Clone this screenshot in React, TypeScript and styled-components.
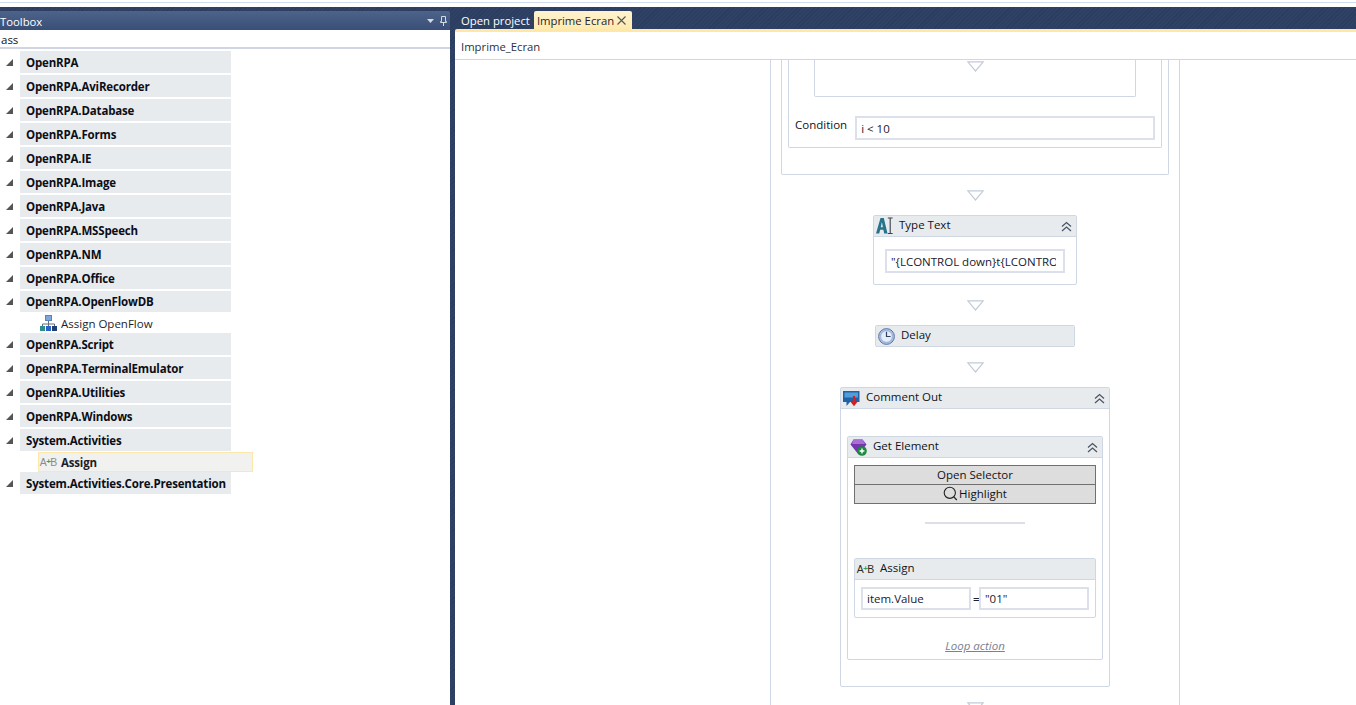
import styled, { createGlobalStyle } from "styled-components";

const GlobalStyle = createGlobalStyle`
    html, body {
        margin: 0;
        padding: 0;
        background: #fff;
        overflow: hidden;
    }
    * {
        box-sizing: border-box;
    }
`;

const Page = styled.div`
    width: 1356px;
    height: 705px;
    display: flex;
    flex-direction: column;
    overflow: hidden;
    font-family: "Open Sans", "Noto Sans", sans-serif;
    font-size: 11.5px;
    color: #1e1e2a;
`;

const TopStrip = styled.div`
    height: 7px;
    flex: none;
    padding-top: 2px;
    background: #fff;
    &::before {
        content: "";
        display: block;
        height: 1px;
        background: #cfdcec;
    }
`;

const Workspace = styled.div`
    flex: 1;
    min-height: 0;
    display: flex;
    background: repeating-linear-gradient(135deg, #2b3d5e 0 1px, #2f4265 1px 3px);
`;

/* toolbox */

const ToolboxPanel = styled.div`
    width: 450px;
    flex: none;
    display: flex;
    flex-direction: column;
    padding-top: 4px;
`;

const ToolboxTitle = styled.div`
    height: 19px;
    flex: none;
    display: flex;
    align-items: center;
    justify-content: space-between;
    padding: 1px 3px 0 0;
    color: #fff;
    font-size: 11.3px;
    background: linear-gradient(#4d6389, #394f77);
    border-top-right-radius: 2px;
`;

const TitleIcons = styled.div`
    display: flex;
    align-items: center;
    gap: 6px;
`;

const SearchBox = styled.div`
    height: 19px;
    flex: none;
    padding: 1px 1px 0;
    line-height: 18px;
    font-size: 11.5px;
    color: #10131c;
    background: #fff;
    border-bottom: 2px solid #cfd5e2;
`;

const TreeList = styled.div`
    flex: 1;
    padding-top: 2px;
    background: #fff;
`;

const GroupRow = styled.div<{ $open?: boolean; $compact?: boolean }>`
    display: flex;
    align-items: center;
    height: ${(p) => (p.$compact ? "21px" : "22px")};
    margin-bottom: ${(p) => (p.$open ? "0" : "2px")};
`;

const Expander = styled.div`
    width: 20px;
    flex: none;
    display: flex;
    padding-left: 6px;
`;

const GroupLabel = styled.div<{ $compact?: boolean }>`
    width: 211px;
    height: 100%;
    padding-left: 6px;
    line-height: ${(p) => (p.$compact ? "21px" : "23px")};
    font-weight: 700;
    letter-spacing: -0.17px;
    color: #0b0e16;
    white-space: nowrap;
    background: #e8ebee;
`;

const ToolRow = styled.div<{ $selected?: boolean; $tall?: boolean }>`
    display: flex;
    align-items: center;
    gap: 4px;
    width: 215px;
    height: ${(p) => (p.$tall ? "21px" : "20px")};
    margin: ${(p) => (p.$selected ? "1px 0 0 38px" : "0 0 0 38px")};
    padding: ${(p) => (p.$tall ? "1px 0 0 1px" : "0 0 0 1px")};
    font-weight: ${(p) => (p.$selected ? 700 : 400)};
    letter-spacing: ${(p) => (p.$selected ? "-0.17px" : "0")};
    background: ${(p) => (p.$selected ? "#f1f1ef" : "transparent")};
    border: 1px solid ${(p) => (p.$selected ? "#fde8ac" : "transparent")};
`;

/* document */

const DocumentArea = styled.div`
    flex: 1;
    min-width: 0;
    display: flex;
    flex-direction: column;
    padding-left: 5px;
`;

const TabStrip = styled.div`
    height: 18px;
    flex: none;
    display: flex;
    align-items: flex-end;
    padding: 0 0 0 6px;
    margin-top: 4px;
`;

const Tab = styled.div<{ $active?: boolean }>`
    display: flex;
    align-items: center;
    gap: 3px;
    height: 18px;
    padding: ${(p) => (p.$active ? "0 6px 0 3px" : "0 4px 0 0")};
    color: ${(p) => (p.$active ? "#1e1e2a" : "#fff")};
    font-size: 11.3px;
    background: ${(p) => (p.$active ? "linear-gradient(#fff3cf, #ffeab0)" : "transparent")};
    border-radius: 2px 2px 0 0;
`;

const DocumentBody = styled.div`
    flex: 1;
    min-height: 0;
    display: flex;
    flex-direction: column;
    background: #fff;
    border-top: 3px solid #ffe8a6;
    border-top-left-radius: 2px;
`;

const DocumentTitle = styled.div`
    height: 28px;
    flex: none;
    padding-left: 6px;
    line-height: 29px;
    font-size: 11.3px;
    color: #2c3040;
    border-bottom: 1px solid #d0d6e2;
`;

const Canvas = styled.div`
    flex: 1;
    min-height: 0;
    overflow: hidden;
    display: flex;
    justify-content: center;
    padding-left: 139px;
`;

const OuterSequence = styled.div`
    width: 410px;
    height: 660px;
    flex: none;
    display: flex;
    flex-direction: column;
    align-items: center;
    border-left: 1px solid #d0d7e4;
    border-right: 1px solid #d0d7e4;
`;

const Frame = styled.div<{ $w: number; $h: number }>`
    width: ${(p) => p.$w}px;
    height: ${(p) => p.$h}px;
    flex: none;
    display: flex;
    flex-direction: column;
    align-items: center;
    border: 1px solid #d0d7e4;
    border-top: none;
    border-radius: 0 0 2px 2px;
`;

const ConditionRow = styled.div`
    width: 100%;
    display: flex;
    align-items: flex-start;
    gap: 8px;
    margin-top: 20px;
    padding-left: 6px;
    line-height: 16px;
`;

const ConditionLabel = styled.div`
    color: #0f1320;
`;

const Card = styled.div<{ $w: number; $h: number; $mt?: number }>`
    width: ${(p) => p.$w}px;
    height: ${(p) => p.$h}px;
    flex: none;
    margin-top: ${(p) => p.$mt ?? 0}px;
    display: flex;
    flex-direction: column;
    background: #fff;
    border: 1px solid #d0d7e4;
    border-radius: 2px;
`;

const CardHeader = styled.div`
    height: 21px;
    flex: none;
    display: flex;
    align-items: center;
    padding: 0 3px 0 2px;
    background: #e8ebee;
    border-bottom: 1px solid #d0d7e4;
    line-height: 18px;
`;

const CardTitle = styled.div`
    flex: 1;
    margin-left: 6px;
    padding-bottom: 3px;
    color: #0f1320;
`;

const CardBody = styled.div<{ $pad: string }>`
    flex: 1;
    min-height: 0;
    display: flex;
    flex-direction: column;
    align-items: center;
    padding: ${(p) => p.$pad};
`;

const ExpressionInput = styled.div<{ $w: number; $tall?: boolean; $raised?: boolean }>`
    width: ${(p) => p.$w}px;
    height: ${(p) => (p.$tall ? "24px" : "23px")};
    margin-top: ${(p) => (p.$raised ? "-1px" : "0")};
    flex: none;
    padding: 0 4px;
    line-height: ${(p) => (p.$tall ? "21px" : "20px")};
    color: #20202e;
    background: #fff;
    border: 2px solid #dbe0ea;
`;

const ClippedValue = styled.div`
    width: 165px;
    white-space: nowrap;
    overflow: hidden;
`;

const ActionButton = styled.div`
    width: 242px;
    height: 20px;
    flex: none;
    display: flex;
    align-items: center;
    justify-content: center;
    gap: 1px;
    padding-bottom: 2px;
    color: #0f1219;
    background: #dddddd;
    border: 1px solid #707070;
    & + & {
        margin-top: -1px;
    }
`;

const Divider = styled.div`
    width: 100px;
    height: 2px;
    flex: none;
    margin: 18px 0 34px;
    background: #dcdfe5;
`;

const AssignFields = styled.div`
    display: flex;
    align-items: center;
    gap: 2px;
`;

const EqualsSign = styled.span`
    width: 4px;
    text-align: center;
    font-weight: 600;
    color: #20202e;
`;

const LoopAction = styled.div`
    margin-top: 20px;
    color: #7b8190;
    font-style: italic;
    text-decoration: underline;
    line-height: 16px;
`;

const DropArrowBox = styled.div<{ $mt: number }>`
    flex: none;
    display: flex;
    height: 11px;
    margin-top: ${(p) => p.$mt}px;
`;

const SmallIcon = styled.svg`
    flex: none;
    display: block;
`;

const IconLetter = styled.span`
    font-family: "Liberation Sans", sans-serif;
    font-weight: 400;
    letter-spacing: 0;
`;

const AssignGlyph = styled.div<{ $muted?: boolean }>`
    width: 17px;
    flex: none;
    display: flex;
    align-items: center;
    justify-content: center;
    font-size: 10.5px;
    line-height: 12px;
    color: ${(p) => (p.$muted ? "#8b8b8b" : "#2b2b2b")};
`;

const PlusArrow = styled.span`
    color: #3f9e55;
    font-size: 8px;
    font-weight: 700;
    margin: 0 -0.5px;
    font-family: "Liberation Sans", sans-serif;
`;

const DropArrow = ({ mt }: { mt: number }) => (
    <DropArrowBox $mt={mt}>
        <svg width="17" height="11" viewBox="0 0 17 11">
            <path d="M0.8 0.8H16.2L8.5 10Z" fill="#fff" stroke="#c3cbd8" strokeWidth="1.2" />
        </svg>
    </DropArrowBox>
);

const Collapse = () => (
    <SmallIcon width="13" height="13" viewBox="0 0 13 13">
        <path d="M2 6.5L6.5 2.5L11 6.5M2 11L6.5 7L11 11" fill="none" stroke="#4a5361" strokeWidth="1.2" />
    </SmallIcon>
);

const ExpandedTriangle = () => (
    <SmallIcon width="7" height="7" viewBox="0 0 7 7">
        <path d="M7 0V7H0Z" fill="#555" />
    </SmallIcon>
);

const NetworkIcon = () => (
    <SmallIcon width="17" height="17" viewBox="0 0 17 17">
        <rect x="5.5" y="0.5" width="6" height="5" fill="#7fa6da" stroke="#5a83bb" />
        <path d="M8.5 6V9M2.5 11V9H14.5V11M8.5 9V11" fill="none" stroke="#6b6b6b" />
        <rect x="0" y="11" width="5" height="5" fill="#2f8c8c" />
        <rect x="6" y="11" width="5" height="5" fill="#2a62c9" />
        <rect x="12" y="11" width="5" height="5" fill="#1f3f78" />
    </SmallIcon>
);

const AssignIcon = ({ muted }: { muted?: boolean }) => (
    <AssignGlyph $muted={muted}>
        <IconLetter>A</IconLetter>
        <PlusArrow>+</PlusArrow>
        <IconLetter>B</IconLetter>
    </AssignGlyph>
);

const TypeTextIcon = () => (
    <SmallIcon width="17" height="18" viewBox="0 0 17 18">
        <path d="M0 16.5L4.5 1H7.8L11.5 16.5H8.2L7.4 12.8H4.2L3.2 16.5ZM4.8 10.3H6.9L5.9 5Z" fill="#27738c" />
        <path d="M11.8 1H16.6M14.2 1V16.5M11.8 16.5H16.6" fill="none" stroke="#39424d" strokeWidth="1.1" />
    </SmallIcon>
);

const ClockIcon = () => (
    <SmallIcon width="17" height="17" viewBox="0 0 17 17">
        <circle cx="8.5" cy="8.5" r="7.9" fill="#a9c0e4" stroke="#5e78a6" />
        <circle cx="8.5" cy="8.5" r="5.8" fill="#e6edf8" stroke="#8fa6cc" strokeWidth="0.7" />
        <path d="M8.5 3.8V8.5H12.6" fill="none" stroke="#2f4268" strokeWidth="1.2" />
    </SmallIcon>
);

const CommentIcon = () => (
    <SmallIcon width="17" height="17" viewBox="0 0 17 17">
        <path d="M0 1H16.5V12H7L3.5 16V12H0Z" fill="#1f62a8" />
        <path d="M1.5 2.5H15V7.5H1.5Z" fill="#4f9ddb" />
        <path d="M11 6V12.5M8.3 11L11 14.5L13.7 11" fill="none" stroke="#cf2126" strokeWidth="2.1" />
    </SmallIcon>
);

const GemIcon = () => (
    <SmallIcon width="17" height="17" viewBox="0 0 17 17">
        <path d="M3.5 0.5H12.5L16.5 5.5L8.5 15.5L0.5 5.5Z" fill="#7636ac" />
        <path d="M3.5 0.5H12.5L15 5H2Z" fill="#a86fd6" />
        <circle cx="12" cy="12" r="4.8" fill="#1c8a3f" />
        <path d="M12 9.6V14.4M9.6 12H14.4" stroke="#fff" strokeWidth="1.4" />
    </SmallIcon>
);

const SearchIcon = () => (
    <SmallIcon width="15" height="15" viewBox="0 0 15 15">
        <circle cx="6.8" cy="6.8" r="5.6" fill="none" stroke="#222" strokeWidth="1.1" />
        <path d="M10.8 10.8L13.8 14" fill="none" stroke="#222" strokeWidth="1.2" />
    </SmallIcon>
);

const CloseIcon = () => (
    <SmallIcon width="9" height="9" viewBox="0 0 9 9">
        <path d="M0.5 0.5L8.5 8.5M8.5 0.5L0.5 8.5" fill="none" stroke="#555" strokeWidth="1.1" />
    </SmallIcon>
);

const DropdownIcon = () => (
    <SmallIcon width="7" height="4" viewBox="0 0 7 4">
        <path d="M0 0H7L3.5 4Z" fill="#d5dbe6" />
    </SmallIcon>
);

const PinIcon = () => (
    <SmallIcon width="7" height="10" viewBox="0 0 7 10">
        <path d="M1.5 0.5H5.5V5.5H6.5V6.5H0.5V5.5H1.5ZM3.5 6.5V10" fill="none" stroke="#d5dbe6" />
    </SmallIcon>
);

const groups = [
    { name: "OpenRPA" },
    { name: "OpenRPA.AviRecorder" },
    { name: "OpenRPA.Database" },
    { name: "OpenRPA.Forms" },
    { name: "OpenRPA.IE" },
    { name: "OpenRPA.Image" },
    { name: "OpenRPA.Java" },
    { name: "OpenRPA.MSSpeech" },
    { name: "OpenRPA.NM" },
    { name: "OpenRPA.Office" },
    { name: "OpenRPA.OpenFlowDB", tool: "Assign OpenFlow", compact: true },
    { name: "OpenRPA.Script" },
    { name: "OpenRPA.TerminalEmulator" },
    { name: "OpenRPA.Utilities" },
    { name: "OpenRPA.Windows" },
    { name: "System.Activities", tool: "Assign", selected: true },
    { name: "System.Activities.Core.Presentation" },
];

const App = () => {
    return (
        <Page>
            <GlobalStyle />
            <TopStrip />
            <Workspace>
                <ToolboxPanel>
                    <ToolboxTitle>
                        Toolbox
                        <TitleIcons>
                            <DropdownIcon />
                            <PinIcon />
                        </TitleIcons>
                    </ToolboxTitle>
                    <SearchBox>ass</SearchBox>
                    <TreeList>
                        {groups.map((group) => (
                            <div key={group.name}>
                                <GroupRow $open={!!group.tool} $compact={group.compact}>
                                    <Expander>
                                        <ExpandedTriangle />
                                    </Expander>
                                    <GroupLabel $compact={group.compact}>{group.name}</GroupLabel>
                                </GroupRow>
                                {group.tool && (
                                    <ToolRow $selected={group.selected} $tall={group.compact}>
                                        {group.selected ? <AssignIcon muted /> : <NetworkIcon />}
                                        {group.tool}
                                    </ToolRow>
                                )}
                            </div>
                        ))}
                    </TreeList>
                </ToolboxPanel>
                <DocumentArea>
                    <TabStrip>
                        <Tab>Open project</Tab>
                        <Tab $active>
                            Imprime Ecran
                            <CloseIcon />
                        </Tab>
                    </TabStrip>
                    <DocumentBody>
                        <DocumentTitle>Imprime_Ecran</DocumentTitle>
                        <Canvas>
                            <OuterSequence>
                                <Frame $w={388} $h={115}>
                                    <Frame $w={374} $h={88}>
                                        <Frame $w={322} $h={37}>
                                            <DropArrow mt={1} />
                                        </Frame>
                                        <ConditionRow>
                                            <ConditionLabel>Condition</ConditionLabel>
                                            <ExpressionInput $w={300} $tall $raised>i &lt; 10</ExpressionInput>
                                        </ConditionRow>
                                    </Frame>
                                </Frame>
                                <DropArrow mt={15} />
                                <Card $w={204} $h={70} $mt={14}>
                                    <CardHeader>
                                        <TypeTextIcon />
                                        <CardTitle>Type Text</CardTitle>
                                        <Collapse />
                                    </CardHeader>
                                    <CardBody $pad="12px 0 0">
                                        <ExpressionInput $w={180} $tall>
                                            <ClippedValue>"{"{"}LCONTROL down{"}"}t{"{"}LCONTROL up{"}"}"</ClippedValue>
                                        </ExpressionInput>
                                    </CardBody>
                                </Card>
                                <DropArrow mt={15} />
                                <Card $w={200} $h={22} $mt={14}>
                                    <CardHeader>
                                        <ClockIcon />
                                        <CardTitle>Delay</CardTitle>
                                    </CardHeader>
                                </Card>
                                <DropArrow mt={15} />
                                <Card $w={270} $h={300} $mt={14}>
                                    <CardHeader>
                                        <CommentIcon />
                                        <CardTitle>Comment Out</CardTitle>
                                        <Collapse />
                                    </CardHeader>
                                    <CardBody $pad="27px 0 0">
                                        <Card $w={256} $h={224}>
                                            <CardHeader>
                                                <GemIcon />
                                                <CardTitle>Get Element</CardTitle>
                                                <Collapse />
                                            </CardHeader>
                                            <CardBody $pad="7px 0 0">
                                                <ActionButton>Open Selector</ActionButton>
                                                <ActionButton>
                                                    <SearchIcon />
                                                    Highlight
                                                </ActionButton>
                                                <Divider />
                                                <Card $w={242} $h={60}>
                                                    <CardHeader>
                                                        <AssignIcon />
                                                        <CardTitle>Assign</CardTitle>
                                                    </CardHeader>
                                                    <CardBody $pad="7px 0 0">
                                                        <AssignFields>
                                                            <ExpressionInput $w={110}>item.Value</ExpressionInput>
                                                            <EqualsSign>=</EqualsSign>
                                                            <ExpressionInput $w={110}>"01"</ExpressionInput>
                                                        </AssignFields>
                                                    </CardBody>
                                                </Card>
                                                <LoopAction>Loop action</LoopAction>
                                            </CardBody>
                                        </Card>
                                    </CardBody>
                                </Card>
                                <DropArrow mt={15} />
                            </OuterSequence>
                        </Canvas>
                    </DocumentBody>
                </DocumentArea>
            </Workspace>
        </Page>
    );
};

export default App;
